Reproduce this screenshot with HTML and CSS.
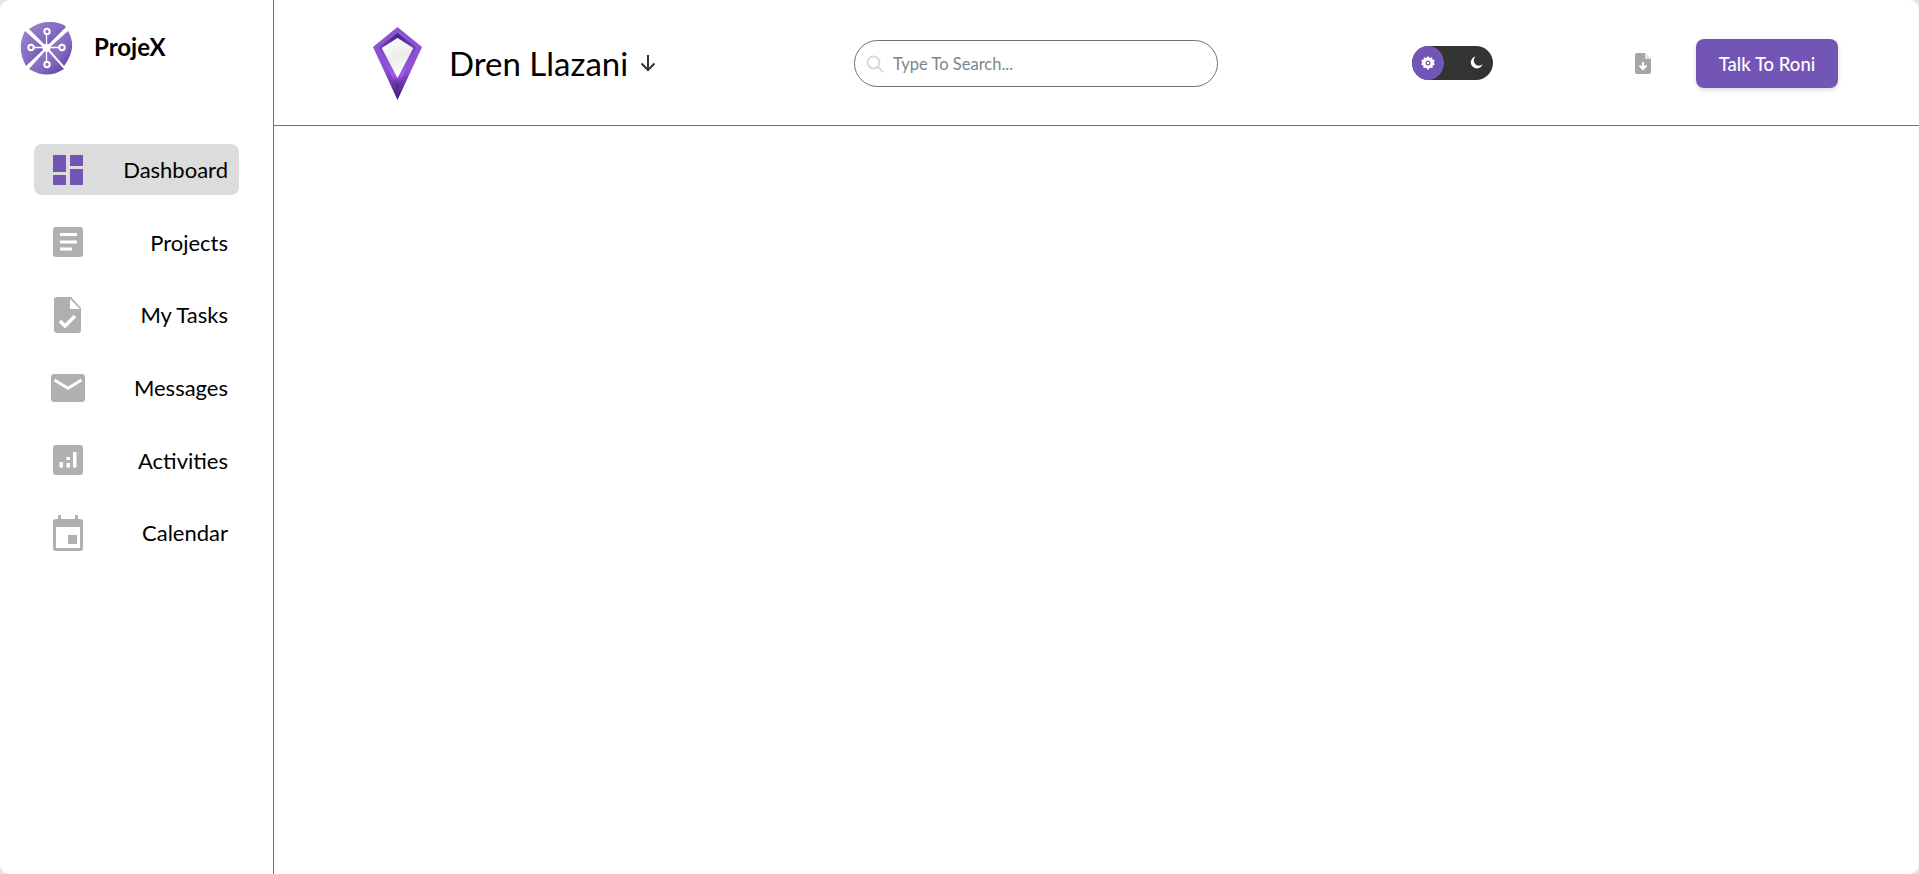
FILE: index.html
```html
<!DOCTYPE html>
<html lang="en">
<head>
  <meta charset="UTF-8" />
  <meta name="viewport" content="width=device-width, initial-scale=1.0"/>
  <title>ProjeX</title>
  <link rel="stylesheet" href="styles.css">
</head>
<body>
  <div class="app">
    <aside class="sidebar">
      <div class="brand">
        <svg class="brand-logo" viewBox="0 0 53 53">
          <defs>
            <linearGradient id="lobe" x1="0" y1="0" x2="1" y2="1">
              <stop offset="0" stop-color="#9a84cc"/>
              <stop offset="0.6" stop-color="#8167bf"/>
              <stop offset="1" stop-color="#5a3d9c"/>
            </linearGradient>
          </defs>
          <path d="M9 7 Q26 -5 44 3 L46 5 L27 24 L26 24 Z" fill="url(#lobe)"/>
          <path d="M48 9 Q58 26 44 44 L29 27 L29 26 Z" fill="url(#lobe)"/>
          <path d="M44 47 Q27 58 9 47 L26 28 L27 28 Z" fill="url(#lobe)"/>
          <path d="M6 44 Q-4 26 5 9 L24 26 L24 27 Z" fill="url(#lobe)"/>
          <g stroke="#fff" stroke-width="1.300" fill="none">
            <path d="M26.500 11 V41 M11 25.500 H41"/>
          </g>
          <circle cx="26.500" cy="25.800" r="4" fill="#fff"/>
          <g fill="#8a72c0" stroke="#fff" stroke-width="2">
            <circle cx="27" cy="9.500" r="2.700"/>
            <circle cx="27" cy="42.500" r="2.700"/>
            <circle cx="11" cy="25.500" r="2.700"/>
            <circle cx="42" cy="25.500" r="2.700"/>
          </g>
        </svg>
        <span class="brand-name">ProjeX</span>
      </div>
      <nav class="nav">
        <a class="nav-item active">
          <svg class="nav-icon" viewBox="0 0 30 30">
            <path d="M0 0H13V17H0ZM17 0H30V11H17ZM17 14H30V30H17ZM0 20H13V30H0Z" fill="#7355b5"/>
          </svg>
          <span>Dashboard</span>
        </a>
        <a class="nav-item">
          <svg class="nav-icon" viewBox="0 0 30 30">
            <rect width="30" height="30" rx="3" fill="#b0b0b0"/>
            <path d="M7 6H24V9H7ZM7 13.500H24V16.500H7ZM7 20.500H19V23.500H7Z" fill="#fff"/>
          </svg>
          <span>Projects</span>
        </a>
        <a class="nav-item">
          <svg class="nav-icon tall" viewBox="0 0 30 36">
            <path d="M4 0H18L28 11V33A3 3 0 0 1 25 36H4A3 3 0 0 1 1 33V3A3 3 0 0 1 4 0Z" fill="#b0b0b0"/>
            <path d="M17 2V12H27Z" fill="#fff"/>
            <path d="M7 24L12 29L22 19" fill="none" stroke="#fff" stroke-width="3.500"/>
          </svg>
          <span>My Tasks</span>
        </a>
        <a class="nav-item">
          <svg class="nav-icon wide" viewBox="0 0 34 28">
            <rect width="34" height="28" rx="3" fill="#b0b0b0"/>
            <path d="M3.500 6L17 14.300L30.500 6" fill="none" stroke="#fff" stroke-width="2.800"/>
          </svg>
          <span>Messages</span>
        </a>
        <a class="nav-item">
          <svg class="nav-icon" viewBox="0 0 30 30">
            <rect width="30" height="30" rx="3" fill="#b0b0b0"/>
            <path d="M6.500 17H10V22.500H6.500ZM13.500 12H17V15H13.500ZM13.500 18H17V22.500H13.500ZM20 7H23.500V22.500H20Z" fill="#fff"/>
          </svg>
          <span>Activities</span>
        </a>
        <a class="nav-item">
          <svg class="nav-icon tall" viewBox="0 0 30 36">
            <path d="M5 0H8V4H22V0H25V4H27A3 3 0 0 1 30 7V33A3 3 0 0 1 27 36H3A3 3 0 0 1 0 33V7A3 3 0 0 1 3 4H5Z" fill="#b0b0b0"/>
            <path d="M3 12H27V33H3Z" fill="#fff"/>
            <path d="M15 20H24V29H15Z" fill="#b0b0b0"/>
          </svg>
          <span>Calendar</span>
        </a>
      </nav>
    </aside>

    <main class="main">
      <header class="topbar">
        <div class="workspace">
          <svg class="workspace-logo" viewBox="0 0 49 73">
            <defs>
              <linearGradient id="gem" x1="0" y1="0" x2="0" y2="1">
                <stop offset="0" stop-color="#8a55d0"/>
                <stop offset="0.6" stop-color="#8e4fd8"/>
                <stop offset="1" stop-color="#3a1a78"/>
              </linearGradient>
              <linearGradient id="gem-band" x1="0" y1="0" x2="0" y2="1">
                <stop offset="0" stop-color="#3f1f85"/>
                <stop offset="0.35" stop-color="#7d4cc0"/>
                <stop offset="0.75" stop-color="#a05fe6"/>
                <stop offset="1" stop-color="#3a1a78"/>
              </linearGradient>
              <linearGradient id="gem-inner" x1="0" y1="0" x2="0.4" y2="1">
                <stop offset="0" stop-color="#ffffff"/>
                <stop offset="0.6" stop-color="#ececec"/>
                <stop offset="1" stop-color="#ffffff"/>
              </linearGradient>
            </defs>
            <path d="M24.500 0L49 20L24.500 73L0 20Z" fill="url(#gem)"/>
            <path d="M24.500 6L43 20.500L24.500 62L6 20.500Z" fill="url(#gem-band)"/>
            <path d="M24.500 11L40.300 21L24.500 51L8.700 21Z" fill="url(#gem-inner)"/>
          </svg>
          <span class="workspace-name">Dren Llazani</span>
          <svg class="workspace-arrow" viewBox="0 0 20 20">
            <path d="M10 2V17M3.500 10.500L10 17L16.500 10.500" fill="none" stroke="#333" stroke-width="2"/>
          </svg>
        </div>

        <label class="search">
          <svg class="search-icon" viewBox="0 0 18 18">
            <circle cx="7.500" cy="7.500" r="6" fill="none" stroke="#d5d8dd" stroke-width="1.800"/>
            <path d="M12 12L17 17" stroke="#d5d8dd" stroke-width="1.800"/>
          </svg>
          <input class="search-input" type="text" placeholder="Type To Search...">
        </label>

        <div class="theme-toggle">
          <span class="theme-knob">
            <svg class="theme-sun" viewBox="0 0 14 14">
              <path d="M7 0L8.700 2L11 1.200L11.500 3.500L13.800 4.200L12.700 6.500L14 8.500L11.800 9.500L11.500 12L9 11.800L7 14L5 11.800L2.500 12L2.200 9.500L0 8.500L1.300 6.500L0.200 4.200L2.500 3.500L3 1.200L5.300 2Z" fill="#fff"/>
              <circle cx="7" cy="7" r="2.500" fill="#7355b5"/>
              <circle cx="7" cy="7" r="1.300" fill="#fff"/>
            </svg>
          </span>
          <svg class="theme-moon" viewBox="0 0 14 14">
            <path d="M6 0.500A6.500 6.500 0 1 0 13.500 9A5.500 5.500 0 0 1 6 0.500Z" fill="#fff"/>
          </svg>
        </div>

        <svg class="download-icon" viewBox="0 0 16 21">
          <path d="M2 0H10L16 6V19A2 2 0 0 1 14 21H2A2 2 0 0 1 0 19V2A2 2 0 0 1 2 0Z" fill="#a6a6a6"/>
          <path d="M10 0V6H16Z" fill="#e4e4e4"/>
          <path d="M8 9V16M4.500 12.500L8 16L11.500 12.500" fill="none" stroke="#fff" stroke-width="2"/>
        </svg>

        <button class="talk-btn">Talk To Roni</button>
      </header>
    </main>
  </div>
</body>
</html>
```

FILE: styles.css
```css
* { box-sizing: border-box; }

html, body {
  height: 100%;
}

body {
  margin: 0;
  background-color: #e6e6e6;
  color: #000;
  font-family: Lato, "Open Sans", sans-serif;
}

.app {
  display: flex;
  height: 100%;
  overflow: hidden;
  border-radius: 10px;
  background-color: #fff;
}

.sidebar {
  width: 274px;
  flex-shrink: 0;
  border-right: 1px solid #6b7280;
  padding: 22px 0 0 20px;
}

.brand {
  display: flex;
  align-items: center;
  gap: 21px;
}
.brand-logo {
  width: 53px;
  height: 53px;
}
.brand-name {
  padding-bottom: 5px;
  font-size: 24px;
  font-weight: 700;
}

.nav {
  display: flex;
  flex-direction: column;
  gap: 21.7px;
  margin-top: 69px;
  margin-left: 14px;
  width: 205px;
}
.nav-item {
  display: flex;
  align-items: center;
  justify-content: space-between;
  height: 51px;
  padding: 0 11px 0 19px;
  border-radius: 8px;
  font-size: 22px;
}
.nav-item.active {
  background-color: #dcdcdc;
}
.nav-icon {
  width: 30px;
  height: 30px;
}
.nav-icon.tall {
  height: 36px;
}
.nav-icon.wide {
  width: 34px;
  height: 28px;
  margin-left: -2px;
}

.main {
  flex: 1;
  min-width: 0;
}

.topbar {
  display: flex;
  align-items: center;
  height: 126px;
  border-bottom: 1px solid #6b7280;
  padding: 2px 0 0 99px;
}

.workspace {
  display: flex;
  align-items: center;
  width: 481px;
}
.workspace-logo {
  width: 49px;
  height: 73px;
}
.workspace-name {
  margin-left: 27px;
  padding-bottom: 2px;
  font-size: 33px;
}
.workspace-arrow {
  width: 20px;
  height: 20px;
  margin-left: 10px;
  margin-bottom: 2px;
}

.search {
  display: flex;
  align-items: center;
  width: 364px;
  height: 47px;
  padding-left: 11px;
  border: 1px solid #6b7280;
  border-radius: 24px;
}
.search-icon {
  width: 18px;
  height: 18px;
}
.search-input {
  flex: 1;
  min-width: 0;
  margin-left: 7px;
  border: none;
  outline: none;
  background: none;
  font-family: inherit;
  font-size: 16.5px;
}
.search-input::placeholder {
  color: #7d8590;
  opacity: 1;
}

.theme-toggle {
  display: flex;
  align-items: center;
  justify-content: space-between;
  width: 81px;
  height: 34px;
  margin-left: 194px;
  margin-bottom: 2px;
  padding-right: 10px;
  border-radius: 17px;
  background-color: #333;
}
.theme-knob {
  display: flex;
  align-items: center;
  justify-content: center;
  width: 32px;
  height: 34px;
  border-radius: 50%;
  background-color: #7355b5;
}
.theme-sun {
  width: 14px;
  height: 14px;
}
.theme-moon {
  width: 13px;
  height: 13px;
}

.download-icon {
  width: 16px;
  height: 21px;
  margin-left: 142px;
}

.talk-btn {
  width: 142px;
  height: 49px;
  margin-left: 45px;
  border: none;
  border-radius: 8px;
  background-color: #7355b5;
  box-shadow: 0 2px 4px rgba(0, 0, 0, 0.15);
  color: #fff;
  font-family: inherit;
  font-size: 18.5px;
  font-weight: 500;
  cursor: pointer;
}
```
